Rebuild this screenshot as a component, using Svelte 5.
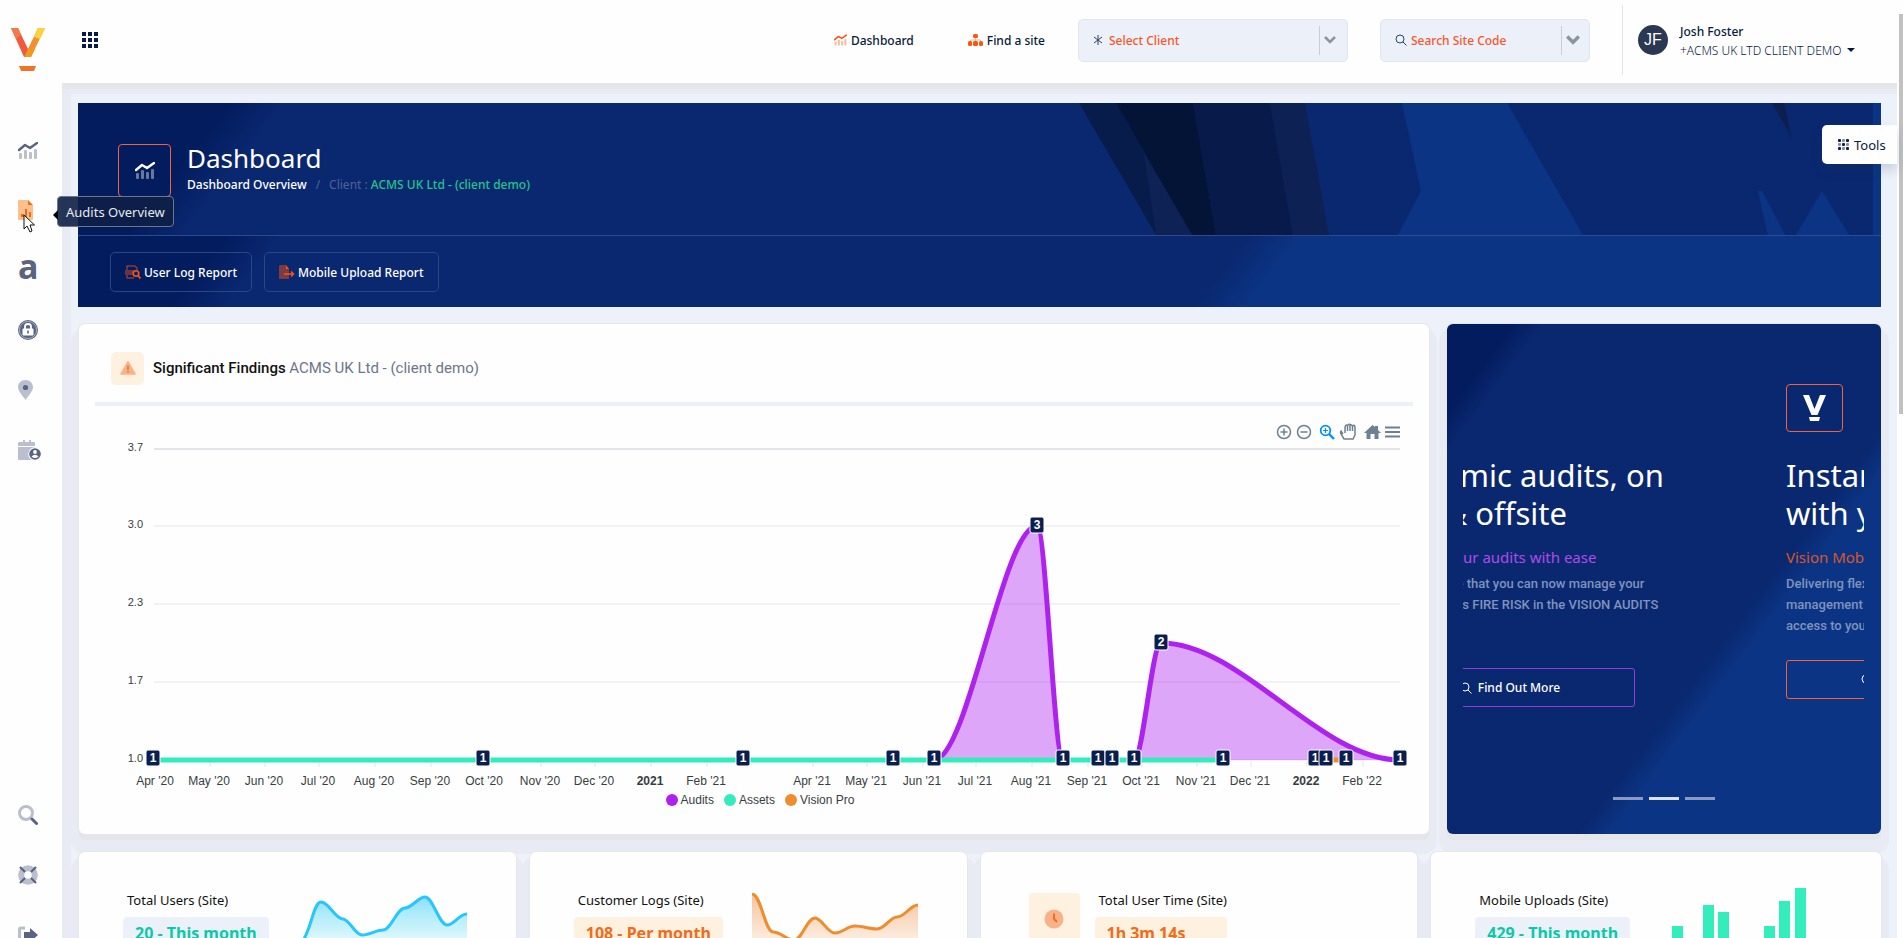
<script lang="ts">
  interface Tick {
    x: number;
    label: string;
    year?: boolean;
  }

  const ticks: Tick[] = [
    { x: 60, label: "Apr '20" },
    { x: 114, label: "May '20" },
    { x: 169, label: "Jun '20" },
    { x: 223, label: "Jul '20" },
    { x: 279, label: "Aug '20" },
    { x: 335, label: "Sep '20" },
    { x: 389, label: "Oct '20" },
    { x: 445, label: "Nov '20" },
    { x: 499, label: "Dec '20" },
    { x: 555, label: '2021', year: true },
    { x: 611, label: "Feb '21" },
    { x: 717, label: "Apr '21" },
    { x: 771, label: "May '21" },
    { x: 827, label: "Jun '21" },
    { x: 880, label: "Jul '21" },
    { x: 936, label: "Aug '21" },
    { x: 992, label: "Sep '21" },
    { x: 1046, label: "Oct '21" },
    { x: 1101, label: "Nov '21" },
    { x: 1155, label: "Dec '21" },
    { x: 1211, label: '2022', year: true },
    { x: 1267, label: "Feb '22" }
  ];

  const gridLines = [
    { y: 43, label: '3.7' },
    { y: 120, label: '3.0' },
    { y: 198, label: '2.3' },
    { y: 276, label: '1.7' },
    { y: 354, label: '1.0' }
  ];

  const markers = [
    ...[58, 388, 648, 798, 839, 968, 1003, 1017, 1039, 1128, 1220, 1231, 1251, 1305].map((x) => ({ x, y: 352, value: 1 })),
    { x: 942, y: 119, value: 3 },
    { x: 1066, y: 236, value: 2 }
  ];

  const legend = [
    { label: 'Audits', color: '#ae22f0' },
    { label: 'Assets', color: '#33ecbc' },
    { label: 'Vision Pro', color: '#ee8c2e' }
  ];

  const uploads = [
    { x: 0, height: 32 },
    { x: 31, height: 53 },
    { x: 46, height: 46 },
    { x: 92, height: 32 },
    { x: 107, height: 57 },
    { x: 123, height: 70 }
  ];

  let slide = $state(1);
</script>

{#snippet trend()}
  <svg class="trend" viewBox="0 0 20 17" aria-hidden="true">
    <path class="trend-line" d="M1 8 L7 3 L12 6 L19 1" fill="none" stroke="currentColor" stroke-width="2.4" stroke-linecap="round" stroke-linejoin="round" />
    <g class="trend-bars" fill="currentColor">
      <rect x="1" y="11" width="3" height="6" rx="1" />
      <rect x="6" y="8" width="3" height="9" rx="1" />
      <rect x="11" y="10" width="3" height="7" rx="1" />
      <rect x="16" y="7" width="3" height="10" rx="1" />
    </g>
  </svg>
{/snippet}

{#snippet magnifier()}
  <svg viewBox="0 0 12 12" width="12" height="12" fill="none" stroke="currentColor" aria-hidden="true">
    <circle cx="5" cy="5" r="4" />
    <path d="M8 8 L11.5 11.5" />
  </svg>
{/snippet}

<div class="shell">
  <nav class="sidebar" aria-label="Main">
    <a class="logo" href="#home" aria-label="Vision home">
      <svg viewBox="0 0 34 46" width="34" height="46">
        <path d="M0 0 H7 L17 21 L20 29 H13 Z" fill="#ef5a3c" />
        <path d="M0 0 H7 L10 7 L5 11 Z" fill="#f27a4a" />
        <path d="M27 0 H34 L20 29 H13 L17 21 Z" fill="#f0902f" />
        <path d="M27 0 H34 L29 11 L23 9 Z" fill="#fdd23f" />
        <path d="M18 19 L24 21 L20 29 H14 Z" fill="#ef9a1f" />
        <path d="M8 38 H25 L23 43 H10 Z" fill="#ef7428" />
      </svg>
    </a>
    <ul class="nav-list">
      <li><a href="#dashboard" aria-label="Dashboard">{@render trend()}</a></li>
      <li>
        <a href="#audits" aria-label="Audits Overview">
          <svg viewBox="0 0 20 20">
            <path d="M1 0 H10 V5 H15 V20 H1 Q0 20 0 19 V1 Q0 0 1 0 Z" fill="#fdc08c" />
            <path d="M10 0 L15 5 H10 Z M3 14 H6 V17 H3 Z M7 9 H9 V17 H7 Z M11 12 H13 V17 H11 Z" fill="#f06a1a" />
          </svg>
        </a>
        <span class="tooltip" role="tooltip">Audits Overview</span>
        <svg class="cursor" viewBox="0 0 13 19" aria-hidden="true">
          <path d="M1 1 V15 L4 12 L7 18 L9 17 L7 11 H11.5 Z" fill="#fff" stroke="#111" />
        </svg>
      </li>
      <li><a class="letter" href="#assets" aria-label="Assets">a</a></li>
      <li>
        <a href="#security" aria-label="Security">
          <svg viewBox="0 0 20 20">
            <circle cx="10" cy="10" r="10" fill="#5a6480" />
            <circle cx="10" cy="10" r="8.6" fill="none" stroke="#b9bfce" stroke-width="0.8" />
            <path d="M7 9 V6.5 Q7 4 10 4 Q13 4 13 6.5 V9" fill="none" stroke="#fff" stroke-width="1.8" />
            <rect x="4.5" y="8.5" width="11" height="7" rx="1" fill="#fff" />
            <path d="M10 10.5 V13.5" stroke="#5a6480" stroke-width="1.6" />
          </svg>
        </a>
      </li>
      <li>
        <a href="#locations" aria-label="Locations">
          <svg viewBox="0 0 20 20">
            <path d="M7.5 0 C12 0 15 3.3 15 7.3 C15 11 11 15 7.5 20 C4 15 0 11 0 7.3 C0 3.3 3 0 7.5 0 Z" fill="#b9bfce" />
            <circle cx="7.5" cy="7.5" r="2.6" fill="#5a6480" />
          </svg>
        </a>
      </li>
      <li>
        <a href="#schedule" aria-label="Schedule">
          <svg class="wide" viewBox="0 0 23 20">
            <path d="M3 2 H5 V0 H7 V2 H11 V0 H13 V2 H16 Q17 2 17 3 V6 H0 V3 Q0 2 1 2 Z M0 7 H17 V20 H1 Q0 20 0 19 Z" fill="#b9bfce" />
            <circle cx="17" cy="14" r="6.8" fill="#fff" />
            <circle cx="17" cy="14" r="5.8" fill="#5a6480" />
            <circle cx="17" cy="12" r="1.9" fill="#fff" />
            <path d="M13.5 16.5 Q17 13 20.5 16.5 Q17 19.5 13.5 16.5 Z" fill="#fff" />
          </svg>
        </a>
      </li>
    </ul>
    <ul class="nav-list nav-bottom">
      <li>
        <a href="#search" aria-label="Search">
          <svg viewBox="0 0 20 20">
            <circle cx="8" cy="8" r="6.5" fill="none" stroke="#b9bfce" stroke-width="3" />
            <path d="M14 14 L18.5 18.5" stroke="#5a6480" stroke-width="3" stroke-linecap="round" />
          </svg>
        </a>
      </li>
      <li>
        <a href="#support" aria-label="Support">
          <svg viewBox="0 0 20 20">
            <circle cx="10" cy="10" r="6.8" fill="none" stroke="#b9bfce" stroke-width="6" />
            <path d="M2 2 L7 7 M18 2 L13 7 M2 18 L7 13 M18 18 L13 13" stroke="#5a6480" stroke-width="2.2" />
          </svg>
        </a>
      </li>
      <li>
        <a href="#logout" aria-label="Log out">
          <svg viewBox="0 0 20 20">
            <path d="M7 3 H3 Q1.5 3 1.5 4.5 V15.5 Q1.5 17 3 17 H7" fill="none" stroke="#b9bfce" stroke-width="3" />
            <path d="M6 7 H12 V3 L20 10 L12 17 V13 H6 Z" fill="#5a6480" />
          </svg>
        </a>
      </li>
    </ul>
  </nav>

  <div class="page">
    <header class="topbar">
      <button class="apps" aria-label="Apps">
        <svg viewBox="0 0 17 17" width="17" height="17" fill="#081a4b">
          {#each [0, 6, 12] as y}
            {#each [0, 6, 12] as x}
              <rect {x} {y} width="4" height="4" />
            {/each}
          {/each}
        </svg>
      </button>
      <a class="top-link" href="#dashboard"><span class="orange">{@render trend()}</span>Dashboard</a>
      <a class="top-link site-link" href="#sites">
        <svg viewBox="0 0 15 12" width="15" height="12" aria-hidden="true">
          <path d="M2.5 8 V6 H12.5 V8 M7.5 4 V8" fill="none" stroke="#fdb48c" />
          <g fill="#f9560f">
            <rect x="5" y="0" width="5" height="4" rx="1.5" />
            <rect x="0" y="7" width="4" height="5" rx="1.5" />
            <rect x="5" y="7" width="5" height="5" rx="1.5" />
            <rect x="11" y="7" width="4" height="5" rx="1.5" />
          </g>
        </svg>
        Find a site
      </a>
      <label class="picker client-picker">
        <svg viewBox="0 0 10 10" width="10" height="10" stroke="#33415f" aria-hidden="true">
          <path d="M5 0 V10 M1 2 L9 8 M9 2 L1 8" />
        </svg>
        <select aria-label="Client"><option>Select Client</option></select>
        <svg class="chevron" viewBox="0 0 12 8" width="12" height="8" aria-hidden="true">
          <path d="M1 1 L6 6 L11 1" fill="none" stroke="#8d949f" stroke-width="2.5" />
        </svg>
      </label>
      <label class="picker code-picker">
        {@render magnifier()}
        <select aria-label="Site code"><option>Search Site Code</option></select>
        <svg class="chevron" viewBox="0 0 12 8" width="14" height="10" aria-hidden="true">
          <path d="M1 1 L6 6 L11 1" fill="none" stroke="#8d949f" stroke-width="3" />
        </svg>
      </label>
      <button class="user">
        <span class="avatar">JF</span>
        <span class="user-text">
          <span class="user-name">Josh Foster</span>
          <span class="user-client">+ACMS UK LTD CLIENT DEMO <i class="caret"></i></span>
        </span>
      </button>
    </header>

    <main>
      <section class="hero">
        <div class="hero-top">
          <svg class="hero-art" viewBox="0 0 795 132" preserveAspectRatio="xMaxYMin meet" aria-hidden="true">
            <path d="M1 0 H38 L114 132 H78 Z" fill="#081c4c" />
            <path d="M38 0 H115 L138 132 H114 Z" fill="#041436" />
            <path d="M66 50 L114 132 H78 Z" fill="#0e2255" />
            <path d="M115 0 H192 L215 132 H138 Z" fill="#071a49" />
            <path d="M192 0 H227 L251 132 H215 Z" fill="#0e2154" />
            <path d="M324 0 H429 L505 132 H320 L343 88 Z" fill="#0b3584" />
            <path d="M694 0 H706 L714 35 Z" fill="#0c2050" />
            <path d="M680 88 H684 L707 132 H690 Z" fill="#0b3584" />
            <path d="M744 88 L771 132 H718 Z" fill="#0b3584" />
          </svg>
          <div class="hero-icon">{@render trend()}</div>
          <div>
            <h1>Dashboard</h1>
            <p class="crumbs"><b>Dashboard Overview</b><span class="slash">/</span>Client : <em>ACMS UK Ltd - (client demo)</em></p>
          </div>
        </div>
        <div class="hero-actions">
          <button>
            <svg viewBox="0 0 16 14" width="16" height="14" aria-hidden="true">
              <path d="M2 5 V1 H10 L12 3 V5 M2 9 V13 H9" fill="none" stroke="#7c3c44" stroke-width="1.5" />
              <rect x="0" y="5" width="12" height="5" fill="#6f3240" />
              <circle cx="11" cy="8.5" r="2.8" fill="#0a2062" stroke="#f9560f" stroke-width="1.6" />
              <path d="M13 10.5 L15.5 13.5" stroke="#f9560f" stroke-width="1.8" />
            </svg>
            User Log Report
          </button>
          <button>
            <svg viewBox="0 0 16 14" width="16" height="14" aria-hidden="true">
              <path d="M1 0 H7 V4 H10 V14 H0 V1 Z" fill="#7c3a44" />
              <path d="M7 0 L10 4 H7 Z" fill="#f9560f" />
              <path d="M5 9 H14 M12 6.5 L14.5 9 L12 11.5" fill="none" stroke="#f9560f" stroke-width="1.5" />
            </svg>
            Mobile Upload Report
          </button>
        </div>
      </section>

      <div class="overview">
        <section class="card findings">
          <header class="findings-head">
            <span class="warn">
              <svg viewBox="0 0 16 14" width="16" height="14" aria-hidden="true">
                <path d="M8 1 L15 13 H1 Z" fill="#fbb188" stroke="#fbb188" stroke-width="1.5" stroke-linejoin="round" />
                <path d="M8 4.5 V9 M8 10 V11.5" stroke="#f06a1a" stroke-width="1.4" />
              </svg>
            </span>
            <h2>Significant Findings <span>ACMS UK Ltd - (client demo)</span></h2>
          </header>
          <svg class="chart" viewBox="0 0 1318 412" role="img" aria-label="Significant findings over time">
            <g stroke="#e4e5e9">
              {#each gridLines as line, i}
                <path d="M59 {line.y} H1305" stroke-width={i === 0 ? 2 : 1} />
              {/each}
              {#each ticks as tick}
                <path d="M{tick.x + 1} 355 V361" />
              {/each}
            </g>
            {#each gridLines as line}
              <text class="y-label" x="48" y={line.y + 2} text-anchor="end">{line.label}</text>
            {/each}
            {#each ticks as tick}
              <text class="x-label" class:year={tick.year} x={tick.x} y="379" text-anchor="middle">{tick.label}</text>
            {/each}
            <g fill="#ae22f0" fill-opacity="0.4">
              <path d="M839 354 C873 354 908 120 942 120 C951 120 959 354 968 354 Z" />
              <path d="M1039 354 C1048 354 1057 237 1066 237 C1146 237 1225 354 1305 354 Z" />
            </g>
            <path d="M1226 354 H1251" stroke="#ee8c2e" stroke-width="5" />
            <g fill="none" stroke="#ae22f0" stroke-width="5">
              <path d="M839 354 C873 354 908 120 942 120 C951 120 959 354 968 354" />
              <path d="M1039 354 C1048 354 1057 237 1066 237 C1146 237 1225 354 1305 354" />
            </g>
            <path d="M58 354 H1128" stroke="#33ecbc" stroke-width="5" />
            {#each markers as marker}
              <rect x={marker.x - 7} y={marker.y - 8} width="14" height="16" rx="2" fill="#0a1f4f" stroke="#fff" />
              <text class="marker" x={marker.x} y={marker.y + 4} text-anchor="middle">{marker.value}</text>
            {/each}
            <g fill="none" stroke="#6e8192" stroke-width="1.5">
              <circle cx="1189" cy="26" r="6.5" />
              <path d="M1189 22.5 V29.5 M1185.5 26 H1192.5" />
              <circle cx="1209" cy="26" r="6.5" />
              <path d="M1205.5 26 H1212.5" />
              <path d="M1248 28 L1246 25 Q1245 26 1246 28 L1249 33 H1258 L1260 29 V21 M1250 27 V21 M1252.5 25 V19.5 M1255 25 V19 M1257.5 25 V20 M1250 21 Q1251 18 1252.5 19.5 Q1255 17 1257.5 20 Q1259 18 1260 21" />
              <path d="M1290 21.5 H1305 M1290 26 H1305 M1290 30.5 H1305" stroke-width="1.8" />
            </g>
            <g fill="none" stroke="#008ffb" stroke-width="1.8">
              <circle cx="1230.5" cy="24.5" r="4.8" />
              <path d="M1234 28 L1239 33" stroke-width="2.4" />
              <path d="M1230.5 22 V27 M1228 24.5 H1233" stroke-width="1.2" />
            </g>
            <path d="M1269 27 L1277.5 19 L1280 21 V20 H1283 V24 L1286 27 H1283.5 V33 H1279.5 V28 H1275.5 V33 H1271.5 V27 Z" fill="#6e8192" />
          </svg>
          <ul class="legend">
            {#each legend as item}
              <li><i style="background: {item.color}"></i>{item.label}</li>
            {/each}
          </ul>
        </section>

        <section class="card promo" aria-label="News">
          <div class="slides">
            <article class="slide purple">
              <div class="slide-space"></div>
              <h3>Dynamic audits, on<br />site &amp; offsite</h3>
              <h4>Manage your audits with ease</h4>
              <p>We announce that you can now manage your<br />audits such as FIRE RISK in the VISION AUDITS</p>
              <button>{@render magnifier()}Find Out More</button>
            </article>
            <article class="slide amber">
              <div class="slide-icon">
                <svg viewBox="0 0 23 26" width="23" height="26" fill="#fff" aria-hidden="true">
                  <path d="M0 0 H6 L11.5 14 L17 0 H23 L14.5 20 H8.5 Z M6 22 H17 L16 26 H7 Z" />
                </svg>
              </div>
              <h3>Instant access<br />with your app</h3>
              <h4>Vision Mobile App</h4>
              <p>Delivering flexible site<br />management and instant<br />access to your audits</p>
              <button>{@render magnifier()}Find Out More</button>
            </article>
          </div>
          <div class="dots">
            {#each [0, 1, 2] as n}
              <button class:active={slide === n} aria-label="Slide {n + 1}" onclick={() => (slide = n)}></button>
            {/each}
          </div>
        </section>
      </div>

      <div class="stats">
        <section class="card stat">
          <div>
            <h5>Total Users (Site)</h5>
            <strong class="teal">20 - This month</strong>
          </div>
          <svg class="spark" viewBox="0 0 166 60" aria-hidden="true">
            <defs>
              <linearGradient id="users-fill" x1="0" y1="0" x2="0" y2="1">
                <stop offset="0" stop-color="#8fdcfb" />
                <stop offset="0.3" stop-color="#aeecf9" />
                <stop offset="0.9" stop-color="#eefbfe" />
              </linearGradient>
            </defs>
            <path d="M0 50 C10 40 12 9 20 9 C28 9 34 26 42 26 C49 27 54 42 61 42 C69 42 75 37 82 37 C90 37 96 15 104 15 C111 15 117 4 124 4 C132 4 138 32 146 32 C153 32 158 21 166 21 V60 H0 Z" fill="url(#users-fill)" />
            <path d="M0 50 C10 40 12 9 20 9 C28 9 34 26 42 26 C49 27 54 42 61 42 C69 42 75 37 82 37 C90 37 96 15 104 15 C111 15 117 4 124 4 C132 4 138 32 146 32 C153 32 158 21 166 21" fill="none" stroke="#28c6ff" stroke-width="3" />
          </svg>
        </section>
        <section class="card stat">
          <div>
            <h5>Customer Logs (Site)</h5>
            <strong class="amber-badge">108 - Per month</strong>
          </div>
          <svg class="spark" viewBox="0 0 166 60" aria-hidden="true">
            <defs>
              <linearGradient id="logs-fill" x1="0" y1="0" x2="0" y2="1">
                <stop offset="0" stop-color="#f6c29c" />
                <stop offset="0.9" stop-color="#fef4ec" />
              </linearGradient>
            </defs>
            <path d="M0 1 C9 1 13 39 21 39 C29 39 34 47 42 47 C50 47 55 25 63 25 C70 25 75 40 83 40 C91 40 95 33 103 33 C111 33 117 36 125 36 C133 36 138 24 145 24 C153 24 158 12 166 12 V60 H0 Z" fill="url(#logs-fill)" />
            <path d="M0 1 C9 1 13 39 21 39 C29 39 34 47 42 47 C50 47 55 25 63 25 C70 25 75 40 83 40 C91 40 95 33 103 33 C111 33 117 36 125 36 C133 36 138 24 145 24 C153 24 158 12 166 12" fill="none" stroke="#ee8c2e" stroke-width="3" />
          </svg>
        </section>
        <section class="card stat time">
          <span class="clock">
            <svg viewBox="0 0 20 20" width="20" height="20" aria-hidden="true">
              <circle cx="10" cy="10" r="9.5" fill="#fbb188" />
              <path d="M10 4.5 V10 L13 13" fill="none" stroke="#f06a1a" stroke-width="1.8" />
            </svg>
          </span>
          <div>
            <h5>Total User Time (Site)</h5>
            <strong class="amber-badge">1h 3m 14s</strong>
          </div>
        </section>
        <section class="card stat">
          <div>
            <h5>Mobile Uploads (Site)</h5>
            <strong class="teal">429 - This month</strong>
          </div>
          <svg class="bars" viewBox="0 0 134 70" fill="#33eebc" aria-hidden="true">
            {#each uploads as bar}
              <rect x={bar.x} y={70 - bar.height} width="11" height={bar.height} />
            {/each}
          </svg>
        </section>
      </div>
    </main>
    <button class="tools">
      <svg viewBox="0 0 12 12" width="12" height="12" fill="#0b1b45" aria-hidden="true">
        {#each [0, 4, 8] as y}
          {#each [0, 4, 8] as x}
            <rect {x} {y} width="3" height="3" rx="1" opacity={(x + y) % 8 === 4 ? 0.5 : 1} />
          {/each}
        {/each}
      </svg>
      Tools
    </button>
  </div>
  <div class="scroll-track"><div class="scroll-thumb"></div></div>
</div>

<style>
  :global(body) {
    background: #ecf1fa;
  }

  .shell {
    display: flex;
    height: 100vh;
    overflow: hidden;
    position: relative;
    font-family: 'Noto Sans', sans-serif;
    font-size: 12px;
    color: #081a3c;
  }

  .shell :global(*) {
    box-sizing: border-box;
  }

  h1, h2, h3, h4, h5, p, ul {
    margin: 0;
    padding: 0;
    font-weight: 400;
    list-style: none;
  }

  a {
    color: inherit;
    text-decoration: none;
  }

  button {
    font: inherit;
    color: inherit;
    background: none;
    border: none;
    padding: 0;
  }

  svg {
    display: block;
    flex: none;
  }

  .trend {
    width: 20px;
    height: 17px;
  }

  .trend-bars {
    opacity: 0.4;
  }

  /* sidebar */
  .sidebar {
    flex: none;
    width: 62px;
    background: #fefefe;
    color: #5a6480;
    display: flex;
    flex-direction: column;
    position: relative;
    z-index: 2;
  }

  .logo {
    padding: 28px 0 0 11px;
    height: 120px;
  }

  .nav-list li {
    position: relative;
    height: 60px;
    display: flex;
    align-items: center;
    padding-left: 18px;
  }

  .nav-list svg:not(.cursor) {
    width: 20px;
  }

  .nav-list svg.wide {
    width: 23px;
  }

  .nav-bottom {
    margin-top: auto;
    margin-bottom: -27px;
  }

  .letter {
    font-size: 34px;
    font-weight: 700;
    line-height: 40px;
    padding-bottom: 8px;
  }

  .tooltip {
    position: absolute;
    left: 57px;
    top: 16px;
    height: 31px;
    padding: 0 8px;
    border: 1px solid #6d7789;
    border-radius: 4px;
    background: rgba(14, 32, 70, 0.9);
    color: #e6e9ef;
    font-size: 13px;
    line-height: 30px;
    white-space: nowrap;
  }

  .tooltip::before {
    content: '';
    position: absolute;
    left: -5px;
    top: 13px;
    border: 5px solid transparent;
    border-left-width: 0;
    border-right-color: #000;
  }

  .cursor {
    position: absolute;
    left: 23px;
    top: 34px;
    width: 13px;
    height: 19px;
  }

  /* top bar */
  .page {
    flex: 1;
    min-width: 0;
    margin-right: 6px;
    position: relative;
  }

  .topbar {
    position: relative;
    z-index: 1;
    height: 83px;
    background: #fefefe;
    box-shadow: 0 6px 0 #e5e6ea, 0 11px 0 #e8ebf4;
    display: flex;
    align-items: center;
    padding-bottom: 3px;
  }

  .apps {
    margin: 0 auto 0 20px;
  }

  .top-link {
    display: flex;
    align-items: center;
    gap: 4px;
    font-weight: 500;
    margin-right: 54px;
  }

  .site-link {
    margin-right: 33px;
  }

  .orange {
    color: #f9560f;
  }

  .orange .trend {
    width: 13px;
    height: 12px;
  }

  .picker {
    height: 43px;
    border: 1px solid #dfe6f2;
    border-radius: 5px;
    background: #ecf1f9;
    display: flex;
    align-items: center;
    padding-left: 14px;
    color: #33415f;
  }

  .picker select {
    flex: 1;
    height: 29px;
    appearance: none;
    border: none;
    border-right: 1px solid #c8cdd6;
    background: none;
    font: inherit;
    font-weight: 500;
    color: #f9562a;
    padding: 0 0 0 6px;
  }

  .client-picker {
    width: 270px;
    margin-right: 32px;
  }

  .code-picker {
    width: 210px;
    margin-right: 32px;
  }

  .code-picker select {
    padding-left: 4px;
  }

  .chevron {
    margin: 0 11px 0 4px;
  }

  .code-picker .chevron {
    margin-right: 9px;
  }

  .user {
    height: 70px;
    width: 275px;
    border-left: 1px solid #e3e5ea;
    display: flex;
    align-items: center;
    gap: 12px;
    padding-left: 15px;
    text-align: left;
  }

  .avatar {
    width: 30px;
    height: 30px;
    border-radius: 50%;
    background: #2b3851;
    color: #fff;
    font-family: 'Liberation Sans', sans-serif;
    font-size: 16px;
    line-height: 30px;
    text-align: center;
  }

  .user-text {
    display: flex;
    flex-direction: column;
    line-height: 19px;
    padding-top: 2px;
  }

  .user-name {
    font-weight: 500;
  }

  .user-client {
    font-weight: 300;
    white-space: nowrap;
  }

  .caret {
    display: inline-block;
    margin-left: 2px;
    border: 4px solid transparent;
    border-top-color: #081a3c;
    border-bottom-width: 0;
    vertical-align: 3px;
  }

  main {
    padding: 20px 16px 0;
    box-shadow: inset 9px 0 0 #e8ebf4;
  }

  /* hero */
  .hero {
    height: 204px;
    background: #0b3584;
    color: #fff;
  }

  .hero-top {
    position: relative;
    height: 132px;
    margin-right: 8px;
    padding: 41px 0 0 40px;
    display: flex;
    gap: 16px;
    background: linear-gradient(128deg, #031c5e 8%, #0a2870 11%);
  }

  .hero-top > div {
    position: relative;
  }

  .hero-art {
    position: absolute;
    right: 0;
    top: 0;
    height: 132px;
  }

  .hero-icon {
    width: 53px;
    height: 53px;
    border: 1px solid #f1623f;
    border-radius: 4px;
    display: flex;
    align-items: center;
    justify-content: center;
  }

  h1 {
    font-size: 26px;
    line-height: 28px;
  }

  .crumbs {
    line-height: 26px;
    color: #4f6390;
  }

  .crumbs b {
    color: #fff;
    font-weight: 500;
  }

  .crumbs em {
    font-style: normal;
    font-weight: 500;
    color: #21c58c;
  }

  .slash {
    margin: 0 9px;
  }

  .hero-actions {
    height: 72px;
    padding: 16px 0 0 32px;
    display: flex;
    gap: 12px;
    align-items: flex-start;
    background: linear-gradient(128deg, #031c5e 8%, #0a2870 11%, #0a2870 63%, #0b3584 66%);
    border-top: 1px solid #2c4a8c;
  }

  .hero-actions button {
    height: 40px;
    padding: 0 14px;
    border: 1px solid #294787;
    border-radius: 5px;
    display: flex;
    align-items: center;
    gap: 3px;
    font-weight: 500;
  }

  /* cards */
  .card {
    background: #fefefe;
    border-radius: 6px;
    box-shadow: 0 0 0 1px #e4e7ee, 0 6px 0 #e4e6ea, 0 12px 0 8px #e8ebf4;
  }

  .overview {
    display: grid;
    grid-template-columns: 1350fr 434fr;
    gap: 18px;
    padding: 17px 0 0 1px;
  }

  .findings {
    padding: 0 16px 26px;
  }

  .findings-head {
    height: 82px;
    border-bottom: 4px solid #ecf1f9;
    display: flex;
    align-items: center;
    gap: 9px;
    padding: 10px 0 0 16px;
  }

  .warn {
    width: 33px;
    height: 33px;
    border-radius: 5px;
    background: #fef1e0;
    display: flex;
    align-items: center;
    justify-content: center;
  }

  h2 {
    font-family: Roboto, sans-serif;
    font-size: 15px;
    font-weight: 500;
    line-height: 20px;
    color: #111;
  }

  h2 span {
    font-weight: 400;
    color: #6d7589;
  }

  .chart {
    width: 100%;
    height: auto;
    margin-bottom: -26px;
    font-family: 'Liberation Sans', sans-serif;
    fill: #373d3f;
  }

  .y-label {
    font-size: 11px;
  }

  .x-label {
    font-size: 12px;
  }

  .year {
    font-weight: 700;
  }

  .marker {
    font-size: 12px;
    font-weight: 700;
    fill: #fff;
  }

  .legend {
    display: flex;
    justify-content: center;
    gap: 10px;
    padding-left: 12px;
    font-family: 'Liberation Sans', sans-serif;
    color: #373d3f;
    line-height: 16px;
  }

  .legend li {
    display: flex;
    align-items: center;
    gap: 3px;
  }

  .legend i {
    width: 12px;
    height: 12px;
    border-radius: 50%;
  }

  /* promo carousel */
  .promo {
    background: linear-gradient(127deg, #031c5e 8%, #0a2870 12%, #0a2870 63%, #0b3584 67%);
    color: #fff;
    padding: 0 17px 34px 16px;
    display: flex;
    flex-direction: column;
    justify-content: space-between;
    min-width: 0;
  }

  .slides {
    overflow: hidden;
    display: flex;
    justify-content: center;
    gap: 151px;
    padding: 60px 0 0 94px;
  }

  .slide {
    flex: none;
    width: 250px;
    white-space: nowrap;
  }

  .slide-space,
  .slide-icon {
    height: 48px;
  }

  .slide-icon {
    width: 57px;
    border: 1px solid #f1623f;
    border-radius: 4px;
    display: flex;
    align-items: center;
    justify-content: center;
  }

  .slide h3 {
    font-size: 31px;
    line-height: 38px;
    margin: 24px 0 15px;
  }

  .slide h4 {
    font-size: 15px;
    line-height: 20px;
  }

  .slide p {
    min-height: 63px;
    margin: 6px 0 24px;
    font-family: Roboto, sans-serif;
    font-size: 13px;
    font-weight: 500;
    line-height: 21px;
    color: #7f93bd;
  }

  .slide button {
    width: 100%;
    height: 39px;
    border: 1px solid currentColor;
    border-radius: 3px;
    display: flex;
    align-items: center;
    justify-content: center;
    gap: 6px;
    font-weight: 500;
    color: #fff;
  }

  .purple h4 {
    color: #b04be8;
  }

  .purple p {
    margin-bottom: 32px;
  }

  .purple button {
    border-color: #8f3fd8;
  }

  .amber h4 {
    color: #d9562b;
  }

  .amber button {
    border-color: #f1623f;
  }

  .dots {
    display: flex;
    justify-content: center;
    gap: 6px;
  }

  .dots button {
    width: 30px;
    height: 3px;
    background: #8a9ac4;
  }

  .dots .active {
    background: #dbe1ee;
  }

  /* stats */
  .stats {
    display: grid;
    grid-template-columns: 437fr 437fr 437fr 450fr;
    gap: 14px;
    padding: 18px 0 0 1px;
  }

  .stat {
    display: flex;
    align-items: flex-start;
    justify-content: space-between;
    height: 160px;
    padding: 38px 49px 0 44px;
  }

  .stat h5 {
    font-size: 13px;
    line-height: 20px;
    padding-left: 4px;
    color: #111;
  }

  .stat strong {
    display: block;
    margin-top: 7px;
    height: 36px;
    border-radius: 4px;
    padding: 0 12px;
    font-size: 16px;
    line-height: 32px;
    font-weight: 700;
  }

  .teal {
    background: #ecf1f9;
    color: #0cc8a8;
  }

  .amber-badge {
    background: #fef1e0;
    color: #ef6c1a;
  }

  .spark {
    width: 166px;
    height: 60px;
    margin-top: 3px;
  }

  .time {
    justify-content: flex-start;
    gap: 15px;
    padding-left: 48px;
  }

  .clock {
    width: 51px;
    height: 51px;
    margin-top: 3px;
    border-radius: 4px;
    background: #fef1e0;
    display: flex;
    align-items: center;
    justify-content: center;
  }

  .bars {
    width: 134px;
    height: 70px;
    margin: -2px 26px 0 0;
  }

  .tools {
    position: absolute;
    z-index: 1;
    right: 0;
    top: 125px;
    width: 75px;
    height: 39px;
    padding-left: 16px;
    border-radius: 5px 0 0 5px;
    background: #fefefe;
    box-shadow: 0 6px 12px rgba(40, 50, 90, 0.18);
    display: flex;
    align-items: center;
    gap: 4px;
    font-size: 13px;
  }

  .scroll-track {
    position: absolute;
    right: 0;
    top: 0;
    bottom: 0;
    width: 6px;
    background: #fefefe;
    padding: 14px 0 0 2px;
  }

  .scroll-thumb {
    height: 400px;
    background: #c1c1c1;
  }
</style>
